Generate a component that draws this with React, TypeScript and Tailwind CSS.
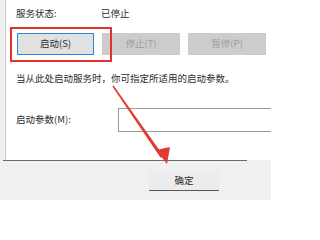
import React from "react";

export default function App() {
  return (
    <div
      className="relative w-[271px] h-[200px] overflow-hidden bg-[#f0f0f0] text-[#2a2a2a]"
      style={{ fontFamily: '"Noto Sans CJK SC", "Liberation Sans", sans-serif' }}
    >
      <div className="ml-[5px] h-[160px] bg-white border-l border-[#c8c8c8] pl-[10px] flex flex-col">
        <div className="mt-[7px] h-[14px] flex items-center text-[9.5px] leading-none">
          <span className="w-[85px]">服务状态:</span>
          <span>已停止</span>
        </div>
        <div className="mt-[12px] ml-[1px] flex gap-[8px]">
          <div className="w-[77px] h-[22px] bg-[#e1e1e1] border border-[#2d86d4] flex items-center justify-center text-[9.5px] leading-none">
            启动(S)
          </div>
          <div className="w-[78px] h-[22px] bg-[#cccccc] flex items-center justify-center text-[9.5px] leading-none text-[#9e9e9e]">
            停止(T)
          </div>
          <div className="w-[78px] h-[22px] bg-[#cccccc] flex items-center justify-center text-[9.5px] leading-none text-[#9e9e9e]">
            暂停(P)
          </div>
        </div>
        <div className="mt-[17px] h-[14px] flex items-center text-[9.5px] leading-none whitespace-nowrap">
          当从此处启动服务时，你可指定所适用的启动参数。
        </div>
        <div className="mt-[22px] flex items-center">
          <span className="w-[102px] text-[9.5px] leading-none">启动参数(M):</span>
          <div className="h-[24px] flex-1 border border-[#9a9a9a] border-r-0 bg-white" />
        </div>
      </div>
      <div className="ml-[3px] w-[244px] h-[1px] bg-[#6a6a6a]" />
      <div className="ml-[149px] mt-[11px] w-[70px] h-[19px] bg-[#ececec] border-b-[1.5px] border-[#5a5a5a] flex items-center justify-center text-[9.5px] leading-none">
        确定
      </div>

      {/* red highlight rectangle */}
      <div className="absolute left-[10px] top-[27px] w-[102px] h-[35px] border-2 border-[#e2302b]" />

      {/* red arrow */}
      <svg className="absolute left-0 top-0" width="271" height="200" viewBox="0 0 271 200">
        <polygon points="112.4,86.4 113.6,85.6 163.4,155.8 160.6,157.8" fill="#e23a32" />
        <polygon points="167,164 156,150 170,147" fill="#e23a32" />
      </svg>
    </div>
  );
}
